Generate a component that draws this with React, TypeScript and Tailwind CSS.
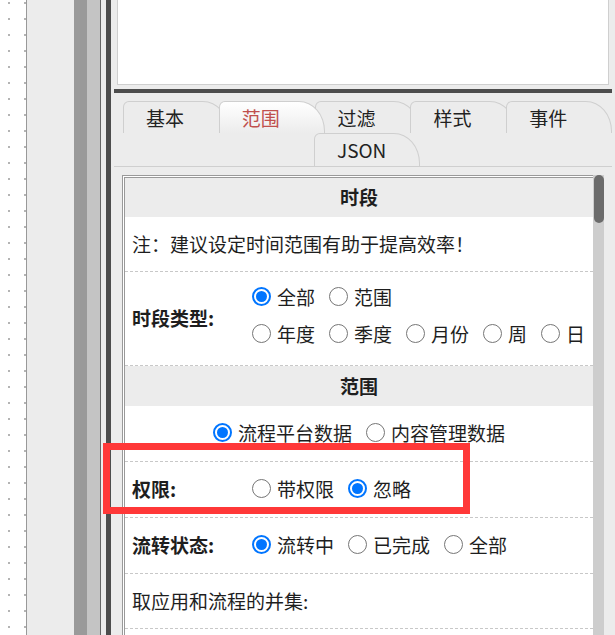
const font = "font-['Noto_Sans_CJK_SC','Noto_Sans',sans-serif]";

const Radio = ({ checked }: { checked?: boolean }) =>
  checked ? (
    <span className="flex w-[19px] h-[19px] shrink-0 items-center justify-center rounded-full border-2 border-[#0075ff] bg-white mb-[3px]">
      <span className="w-[11px] h-[11px] rounded-full bg-[#0075ff]" />
    </span>
  ) : (
    <span className="w-[19px] h-[19px] shrink-0 rounded-full border-[1.5px] border-[#767676] bg-white mb-[3px]" />
  );

const Option = ({ label, checked }: { label: string; checked?: boolean }) => (
  <label className="flex items-center">
    <Radio checked={checked} />
    <span className="ml-[6px]">{label}</span>
  </label>
);

const tabs = ["基本", "范围", "过滤", "样式", "事件"];

const Tab = ({ label, active, first }: { label: string; active?: boolean; first?: boolean }) => (
  <div
    className={`relative w-[106px] h-full border-l border-t border-r border-[#cfcfcf] rounded-tl-[6px] rounded-tr-[26px_30px] pl-[22px] leading-[31px] text-[19px] ${
      first ? "" : "-ml-[10px]"
    } ${active ? "z-10 bg-linear-to-b from-white to-[#ececec] text-[#c0504d]" : "bg-[#ececec] text-[#222]"}`}
  >
    {label}
  </div>
);

// dotted canvas on the far left
const DotGrid = () => (
  <svg width="26" height="635" className="block">
    <defs>
      <pattern id="dots" x="0" y="2" width="16" height="16" patternUnits="userSpaceOnUse">
        <rect x="8" y="0" width="2" height="2" fill="#b4b4b4" />
      </pattern>
    </defs>
    <rect width="26" height="635" fill="#ffffff" />
    <rect width="26" height="635" fill="url(#dots)" />
  </svg>
);

export default function App() {
  return (
    <div className={`relative flex w-[615px] h-[635px] overflow-hidden bg-[#ececec] text-[#1e1e1e] ${font}`}>
      {/* left strips */}
      <div className="w-[27px] shrink-0 border-r border-[#999]">
        <DotGrid />
      </div>
      <div className="w-[47px] shrink-0 bg-[#ececec]" />
      <div className="w-[13px] shrink-0 bg-[#9a9a9a]" />
      <div className="w-[13px] shrink-0 bg-[#c4c4c4]" />
      <div className="w-px shrink-0 bg-[#666]" />
      <div className="w-[5px] shrink-0 bg-[#ececec]" />
      <div className="w-[5px] shrink-0 bg-[#4d4d4d]" />

      {/* main column */}
      <div className="flex flex-1 flex-col">
        <div className="ml-[6px] w-[492px] h-[85px] shrink-0 border-x border-b border-[#cfcfcf] bg-white" />
        <div className="mt-[4px] ml-[3px] w-[498px] h-[4px] shrink-0 bg-[#4d4d4d]" />

        {/* tabs */}
        <div className="ml-[3px] w-[498px] shrink-0 pt-[8px] border-b border-[#cfcfcf]">
          <div className="flex h-[32px] pl-[9px]">
            {tabs.map((t, i) => (
              <Tab key={t} label={t} first={i === 0} active={i === 1} />
            ))}
          </div>
          <div className="flex h-[33px] pl-[200px]">
            <Tab label="JSON" first />
          </div>
        </div>

        {/* panel + scrollbar */}
        <div className="mt-[8px] flex flex-1 text-[19px]">
          <div className="ml-[11px] w-[471px] border-t-[3px] border-l-[3px] border-double border-[#999] bg-white">
            <div className="flex h-[39px] items-center justify-center bg-[#ececec] font-bold">时段</div>
            <div className="flex h-[55px] items-center border-b border-dashed border-[#c8c8c8] pl-[7px]">
              注：建议设定时间范围有助于提高效率！
            </div>
            <div className="flex h-[94px] items-center border-b border-dashed border-[#c8c8c8]">
              <div className="w-[127px] shrink-0 pl-[7px] font-bold">时段类型:</div>
              <div className="flex flex-col self-start pt-[7px]">
                <div className="flex h-[37px] items-center gap-[14px]">
                  <Option label="全部" checked />
                  <Option label="范围" />
                </div>
                <div className="flex h-[37px] items-center gap-[14px]">
                  <Option label="年度" />
                  <Option label="季度" />
                  <Option label="月份" />
                  <Option label="周" />
                  <Option label="日" />
                </div>
              </div>
            </div>
            <div className="flex h-[40px] items-center justify-center bg-[#ececec] font-bold">范围</div>
            <div className="flex h-[56px] items-center justify-center gap-[14px] border-b border-dashed border-[#c8c8c8]">
              <Option label="流程平台数据" checked />
              <Option label="内容管理数据" />
            </div>
            <div className="flex h-[56px] items-center border-b border-dashed border-[#c8c8c8]">
              <div className="w-[127px] shrink-0 pl-[7px] font-bold">权限:</div>
              <div className="flex items-center gap-[14px]">
                <Option label="带权限" />
                <Option label="忽略" checked />
              </div>
            </div>
            <div className="flex h-[56px] items-center border-b border-dashed border-[#c8c8c8]">
              <div className="w-[127px] shrink-0 pl-[7px] font-bold">流转状态:</div>
              <div className="flex items-center gap-[14px]">
                <Option label="流转中" checked />
                <Option label="已完成" />
                <Option label="全部" />
              </div>
            </div>
            <div className="flex h-[55px] items-center border-b border-dashed border-[#c8c8c8] pl-[7px]">
              取应用和流程的并集:
            </div>
          </div>
          <div className="w-[11px] bg-[#cdcdcd]">
            <div className="mx-auto h-[48px] w-[10px] rounded-full bg-[#6b6b6b]" />
          </div>
        </div>
      </div>

      {/* red annotation box */}
      <div className="absolute left-[103px] top-[443px] w-[367px] h-[71px] border-[7px] border-[#ff3838]" />
    </div>
  );
}
